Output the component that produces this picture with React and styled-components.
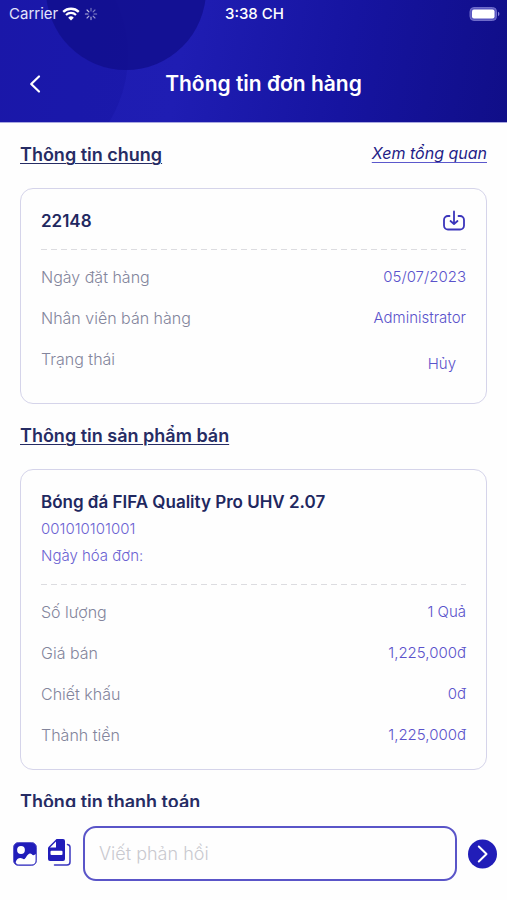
import React, { useState } from "react";
import styled, { createGlobalStyle } from "styled-components";

const GlobalStyle = createGlobalStyle`
  * {
    box-sizing: border-box;
  }

  body {
    background: #fefefe;
    font-family: Inter, "Noto Sans", sans-serif;
    margin: 0;
  }

  button {
    background: none;
    border: 0;
    cursor: pointer;
    font: inherit;
    padding: 0;
  }
`;

const Screen = styled.div`
  display: flex;
  flex-direction: column;
  height: 100vh;
`;

const Header = styled.header`
  background: linear-gradient(
    100deg,
    #1d1bae 0%,
    #1f1db3 36%,
    #1614a0 68%,
    #100e88 100%
  );
  border-bottom: 1px solid #a9a8e0;
  color: #fff;
  flex: none;
  overflow: hidden;
  position: relative;
`;

const HeaderShapes = styled.svg`
  left: 0;
  position: absolute;
  top: 0;
`;

const StatusBar = styled.div`
  align-items: center;
  display: grid;
  font-size: 15px;
  grid-template-columns: 1fr auto 1fr;
  line-height: 20px;
  padding: 4px 7px 20px 9px;
  position: relative;
`;

const Carrier = styled.div`
  align-items: center;
  color: #e4e4fb;
  display: flex;
  gap: 4px;
`;

const Clock = styled.time`
  font-weight: 500;
`;

const Battery = styled.svg`
  justify-self: end;
`;

const NavBar = styled.div`
  align-items: center;
  display: grid;
  grid-template-columns: 70px 1fr 50px;
  padding: 20px 0 18px;
  position: relative;
`;

const BackButton = styled.button`
  align-items: center;
  color: #fff;
  display: flex;
  height: 40px;
  justify-content: center;
`;

const Title = styled.h1`
  font-size: 21px;
  font-weight: 600;
  line-height: 28px;
  margin: 0;
  text-align: center;
`;

const Content = styled.main`
  display: flex;
  flex: 1;
  flex-direction: column;
  gap: 20px;
  min-height: 0;
  overflow: hidden;
  padding: 20px 20px 0;
`;

const Section = styled.section`
  display: flex;
  flex: none;
  flex-direction: column;
  gap: 21px;
`;

const SectionHeader = styled.div`
  display: flex;
  justify-content: space-between;
  line-height: 24px;
`;

const SectionTitle = styled.h2`
  color: #262c64;
  font-size: 18px;
  font-weight: 600;
  margin: 0;
  text-decoration: underline;
  text-decoration-thickness: 1px;
  text-underline-offset: 2px;
`;

const OverviewLink = styled.a`
  color: #231c86;
  font-size: 16px;
  font-style: italic;
  line-height: 20px;
  text-decoration-color: #5b58cc;
  text-decoration-thickness: 1px;
  text-underline-offset: 3px;
`;

const Card = styled.article`
  border: 1px solid #d5d4ea;
  border-radius: 13px;
  line-height: 24px;
  padding: 20px 20px 22px;
`;

const CardHeader = styled.div`
  align-items: center;
  display: flex;
  justify-content: space-between;
`;

const CardTitle = styled.h3`
  color: #1f2860;
  font-size: 17px;
  font-weight: 600;
  margin: 0;
`;

const SaveButton = styled.button`
  color: #3a34bb;
  display: flex;
`;

const CardNote = styled.p`
  color: #6b62d2;
  font-size: 15px;
  font-weight: 300;
  margin: 3px 0 0;
`;

const Divider = styled.hr`
  background: repeating-linear-gradient(
    to right,
    #dcdce0 0 6px,
    transparent 6px 10px
  );
  border: 0;
  height: 1px;
  margin: 16px 0 15px;
`;

const Rows = styled.dl`
  display: flex;
  flex-direction: column;
  font-weight: 300;
  gap: 17px;
  margin: 0;
`;

const Row = styled.div`
  display: flex;
  justify-content: space-between;
`;

const Label = styled.dt`
  color: #83859c;
  font-size: 16px;
`;

const Value = styled.dd`
  color: #5a52cb;
  font-size: 15px;
  margin: 0;
  padding: ${props => (props.$tag ? "5px 10px" : "0")};
`;

const Composer = styled.form`
  align-items: center;
  display: flex;
  flex: none;
  gap: 11px;
  padding: 19px 10px 19px 13px;
`;

const AttachButton = styled.button`
  display: flex;
  flex: none;
`;

const ReplyInput = styled.input`
  background: #fefefe;
  border: 2px solid #5a55c8;
  border-radius: 13px;
  color: #262c64;
  flex: 1;
  font: 300 18px Inter, "Noto Sans", sans-serif;
  height: 55px;
  min-width: 0;
  outline: none;
  padding: 0 14px;

  &::placeholder {
    color: #c9c9cf;
    opacity: 1;
  }
`;

const SendButton = styled.button`
  display: flex;
  flex: none;
`;

const orderRows = [
  { label: "Ngày đặt hàng", value: "05/07/2023" },
  { label: "Nhân viên bán hàng", value: "Administrator" },
  { label: "Trạng thái", value: "Hủy", tag: true }
];

const productRows = [
  { label: "Số lượng", value: "1 Quả" },
  { label: "Giá bán", value: "1,225,000đ" },
  { label: "Chiết khấu", value: "0đ" },
  { label: "Thành tiền", value: "1,225,000đ" }
];

const spokes = [0, 45, 90, 135, 180, 225, 270, 315];

function WifiIcon() {
  return (
    <svg width="18" height="14" viewBox="0 0 18 14" fill="none">
      <path
        d="M1.2 4.9a11.2 11.2 0 0 1 15.6 0"
        stroke="#fff"
        strokeWidth="2.3"
      />
      <path d="M4 7.9a7.2 7.2 0 0 1 10 0" stroke="#fff" strokeWidth="2.1" />
      <path d="M9 13.6 6.2 10.7a4 4 0 0 1 5.6 0Z" fill="#fff" />
    </svg>
  );
}

function Spinner() {
  return (
    <svg width="14" height="14" viewBox="-7 -7 14 14">
      {spokes.map((angle, i) => (
        <path
          key={angle}
          d="M0-3V-5.6"
          stroke="#fff"
          strokeLinecap="round"
          strokeWidth="1.2"
          opacity={0.4 + i * 0.05}
          transform={`rotate(${angle})`}
        />
      ))}
    </svg>
  );
}

function InfoRows({ rows }) {
  return (
    <Rows>
      {rows.map(row => (
        <Row key={row.label}>
          <Label>{row.label}</Label>
          <Value $tag={row.tag}>{row.value}</Value>
        </Row>
      ))}
    </Rows>
  );
}

function AppHeader() {
  return (
    <Header>
      <HeaderShapes width="260" height="123" aria-hidden="true">
        <circle cx="0" cy="55" r="128" fill="#15129a" opacity="0.3" />
        <circle cx="126" cy="-10" r="80" fill="#120f8e" opacity="0.85" />
      </HeaderShapes>
      <StatusBar>
        <Carrier>
          Carrier
          <WifiIcon />
          <Spinner />
        </Carrier>
        <Clock>3:38 CH</Clock>
        <Battery width="31" height="14" viewBox="0 0 31 14">
          <rect
            x="1"
            y="0.5"
            width="26.5"
            height="13"
            rx="4"
            fill="#5a57c2"
            stroke="#6f6cca"
          />
          <rect x="3" y="2.5" width="22.5" height="9" rx="2" fill="#fff" />
          <path d="M29 4.8a2.4 2.4 0 0 1 0 4.4Z" fill="#8583d6" />
        </Battery>
      </StatusBar>
      <NavBar>
        <BackButton type="button" aria-label="Quay lại">
          <svg width="12" height="20" viewBox="0 0 12 20" fill="none">
            <path
              d="M10 2.5 2.2 10l7.8 7.5"
              stroke="currentColor"
              strokeLinecap="round"
              strokeLinejoin="round"
              strokeWidth="2.2"
            />
          </svg>
        </BackButton>
        <Title>Thông tin đơn hàng</Title>
      </NavBar>
    </Header>
  );
}

function ReplyForm() {
  const [reply, setReply] = useState("");

  return (
    <Composer
      onSubmit={e => {
        e.preventDefault();
        setReply("");
      }}
    >
      <AttachButton type="button" aria-label="Chọn ảnh">
        <svg width="24" height="24" viewBox="0 0 24 24">
          <rect
            x="0.5"
            y="0.5"
            width="23"
            height="23"
            rx="5"
            fill="#211dba"
            stroke="#5c58cb"
          />
          <circle cx="8" cy="8" r="3.9" fill="#fff" />
          <path
            d="M2.6 20.2c.7-2.7 2.7-4.200 4.700-4.200 1.600 0 2.600 1.200 3.700 1.200 1.700 0 3.300-5.700 6-5.700 1.600 0 2.200 1.700 3.400 1.700.9 0 1.500-.4 2.200-1.400V18.500a4 4 0 0 1-4 4H6c-1.600 0-2.900-.8-3.400-2.300Z"
            fill="#fff"
          />
        </svg>
      </AttachButton>
      <AttachButton type="button" aria-label="Chọn tệp">
        <svg width="24" height="32" viewBox="0 0 24 32">
          <path
            d="M8.5 1H15a2 2 0 0 1 2 2v18a2 2 0 0 1-2 2H2a2 2 0 0 1-2-2V9.500Z"
            fill="#211dba"
          />
          <path d="M8 3.500V9.500H2Z" fill="#fff" />
          <rect x="2.500" y="12.800" width="12" height="4.200" rx="1" fill="#fff" />
          <path
            d="M19.500 6.500c1.500.2 2.500 1 2.500 2.800v14.700a3 3 0 0 1-3 3H6.500"
            fill="none"
            stroke="#3a36c0"
            strokeLinecap="round"
            strokeWidth="1.5"
          />
        </svg>
      </AttachButton>
      <ReplyInput
        aria-label="Viết phản hồi"
        placeholder="Viết phản hồi"
        value={reply}
        onChange={e => setReply(e.target.value)}
      />
      <SendButton type="submit" aria-label="Gửi">
        <svg width="29" height="30" viewBox="0 0 29 30" fill="none">
          <circle cx="14.5" cy="15" r="14.5" fill="#211db8" />
          <path
            d="m10.800 7.500 7.700 7.500-7.700 7.500"
            stroke="#fff"
            strokeLinecap="round"
            strokeLinejoin="round"
            strokeWidth="2"
          />
        </svg>
      </SendButton>
    </Composer>
  );
}

function App() {
  return (
    <Screen>
      <GlobalStyle />
      <AppHeader />
      <Content>
        <Section>
          <SectionHeader>
            <SectionTitle>Thông tin chung</SectionTitle>
            <OverviewLink href="#overview">Xem tổng quan</OverviewLink>
          </SectionHeader>
          <Card>
            <CardHeader>
              <CardTitle>22148</CardTitle>
              <SaveButton type="button" aria-label="Tải xuống">
                <svg width="24" height="22" viewBox="0 0 24 22" fill="none">
                  <path
                    d="M7.500 6H6a4 4 0 0 0-4 4v5.500a4 4 0 0 0 4 4h12a4 4 0 0 0 4-4V10a4 4 0 0 0-4-4h-1.500"
                    stroke="currentColor"
                    strokeLinecap="round"
                    strokeWidth="1.8"
                  />
                  <path
                    d="M12 1.500V13M8.500 11l3.500 3 3.500-3"
                    stroke="currentColor"
                    strokeLinecap="round"
                    strokeLinejoin="round"
                    strokeWidth="1.8"
                  />
                </svg>
              </SaveButton>
            </CardHeader>
            <Divider />
            <InfoRows rows={orderRows} />
          </Card>
        </Section>
        <Section>
          <SectionHeader>
            <SectionTitle>Thông tin sản phẩm bán</SectionTitle>
          </SectionHeader>
          <Card>
            <CardTitle>Bóng đá FIFA Quality Pro UHV 2.07</CardTitle>
            <CardNote>001010101001</CardNote>
            <CardNote>Ngày hóa đơn:</CardNote>
            <Divider />
            <InfoRows rows={productRows} />
          </Card>
        </Section>
        <Section>
          <SectionHeader>
            <SectionTitle>Thông tin thanh toán</SectionTitle>
          </SectionHeader>
        </Section>
      </Content>
      <ReplyForm />
    </Screen>
  );
}

export default App;
